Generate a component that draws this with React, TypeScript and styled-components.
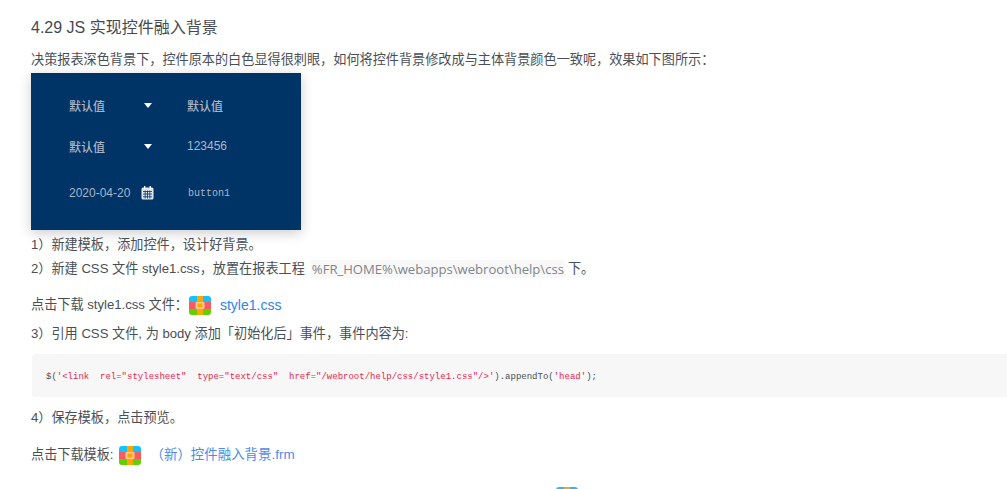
import React from "react";
import styled, { createGlobalStyle } from "styled-components";

const Global = createGlobalStyle`
  html, body { margin: 0; padding: 0; background: #fff; overflow: hidden; }
  body { width: 1007px; height: 489px; }
`;

const Article = styled.main`
  width: 1007px;
  height: 489px;
  overflow: hidden;
  box-sizing: border-box;
  padding: 18px 0 0 31px;
  font-family: "Liberation Sans", "Noto Sans CJK SC", sans-serif;
  color: #4a4f57;
  font-size: 13.15px;
`;

const Heading = styled.h4`
  margin: 0;
  font-size: 16px;
  line-height: 20px;
  font-weight: 400;
  color: #454a52;
`;

const Line = styled.p<{ $top: number }>`
  margin: ${(p) => p.$top}px 0 0;
  height: 20px;
  line-height: 20px;
  display: flex;
  align-items: center;
  white-space: pre;
`;

const Preview = styled.div`
  width: 270px;
  height: 157px;
  margin-top: 3px;
  box-sizing: border-box;
  padding: 22px 0 0 38px;
  background: #003366;
  box-shadow: 0 3px 12px rgba(0, 0, 0, 0.2);
  display: grid;
  grid-template-columns: 72px 46px auto;
  grid-template-rows: 20px 20px 32px;
  row-gap: 21px;
  align-items: center;
  color: #aab6c6;
  font-size: 12px;
  font-weight: 500;
`;

const Caret = styled.span`
  width: 0;
  height: 0;
  margin-left: 3px;
  border-left: 4.5px solid transparent;
  border-right: 4.5px solid transparent;
  border-top: 5px solid #fff;
`;

const ButtonLabel = styled.span`
  font-family: "Liberation Mono", monospace;
  font-size: 10px;
  font-weight: 400;
  margin-left: 1px;
`;

const InlineCode = styled.code`
  margin: 0 3px 0 6px;
  padding: 0 1px;
  background: #f8f8f8;
  color: #80858c;
  font-family: "Open Sans", sans-serif;
  font-size: 13.1px;
  line-height: 18px;
`;

const FileLink = styled.a<{ $size: number; $color: string }>`
  color: ${(p) => p.$color};
  font-size: ${(p) => p.$size}px;
  text-decoration: none;
`;

const FileIconBox = styled.svg<{ $left: number; $right: number }>`
  width: 22px;
  height: 19px;
  flex: none;
  margin: 0 ${(p) => p.$right}px 0 ${(p) => p.$left}px;
`;

const CodeBlock = styled.pre`
  margin: 10px 0 0 1px;
  width: 1000px;
  height: 43px;
  line-height: 46px;
  box-sizing: border-box;
  padding-left: 14px;
  border-radius: 3px;
  background: #f7f7f7;
  color: #4a4f57;
  font-family: "Liberation Mono", monospace;
  font-size: 9px;
`;

const Str = styled.span`
  color: #e8264f;
`;

const BottomIcon = styled.svg`
  display: block;
  width: 22px;
  height: 19px;
  margin: 22px 0 0 525px;
`;

const IconArt = () => (
  <>
    <defs>
      <clipPath id="rounded">
        <rect width="22" height="19" rx="3" />
      </clipPath>
    </defs>
    <g clipPath="url(#rounded)">
      <rect width="22" height="6" fill="#12c4fb" />
      <rect y="6" width="22" height="7" fill="#fb5a62" />
      <rect y="13" width="22" height="6" fill="#60d000" />
      <rect x="8" width="6" height="19" fill="#ffa900" />
      <rect x="6.5" y="6" width="9" height="7" rx="1" fill="#ffc98a" />
      <rect x="8.5" y="7.5" width="5" height="4" fill="#ffa900" />
    </g>
  </>
);

const FileIcon = ({ left, right }: { left: number; right: number }) => (
  <FileIconBox $left={left} $right={right} viewBox="0 0 22 19">
    <IconArt />
  </FileIconBox>
);

const CalendarIcon = () => (
  <svg width="13" height="14" viewBox="0 0 13 14">
    <rect x="0.5" y="1.5" width="12" height="12" rx="1.5" fill="#dfe6ef" />
    <rect x="3" y="0" width="1.4" height="3" fill="#fff" />
    <rect x="8.6" y="0" width="1.4" height="3" fill="#fff" />
    <path
      d="M2 5.5h9M2 8h9M2 10.8h9M4.2 4.5v8M6.5 4.5v8M8.8 4.5v8"
      stroke="#003366"
      strokeWidth="0.8"
      fill="none"
    />
  </svg>
);

export default function App() {
  return (
    <Article>
      <Global />
      <Heading>4.29 JS 实现控件融入背景</Heading>
      <Line $top={12}>
        决策报表深色背景下，控件原本的白色显得很刺眼，如何将控件背景修改成与主体背景颜色一致呢，效果如下图所示：
      </Line>
      <Preview>
        <span>默认值</span>
        <Caret />
        <span>默认值</span>
        <span>默认值</span>
        <Caret />
        <span>123456</span>
        <span>2020-04-20</span>
        <CalendarIcon />
        <ButtonLabel>button1</ButtonLabel>
      </Preview>
      <Line $top={5}>1）新建模板，添加控件，设计好背景。</Line>
      <Line $top={4}>
        2）新建 CSS 文件 style1.css，放置在报表工程
        <InlineCode>%FR_HOME%\webapps\webroot\help\css</InlineCode>
        下。
      </Line>
      <Line $top={16}>
        点击下载 style1.css 文件：
        <FileIcon left={1} right={9} />
        <FileLink $size={14} $color="#2f84e8">style1.css</FileLink>
      </Line>
      <Line $top={9}>3）引用 CSS 文件, 为 body 添加「初始化后」事件，事件内容为:</Line>
      <CodeBlock>
        $(
        <Str>'&lt;link  rel="stylesheet"  type="text/css"  href="/webroot/help/css/style1.css"/&gt;'</Str>
        ).appendTo(<Str>'head'</Str>);
      </CodeBlock>
      <Line $top={11}>4）保存模板，点击预览。</Line>
      <Line $top={17}>
        点击下载模板:
        <FileIcon left={5} right={10} />
        <FileLink $size={13.45} $color="#4d8ce8">（新）控件融入背景.frm</FileLink>
      </Line>
      <BottomIcon viewBox="0 0 22 19">
        <IconArt />
      </BottomIcon>
    </Article>
  );
}
